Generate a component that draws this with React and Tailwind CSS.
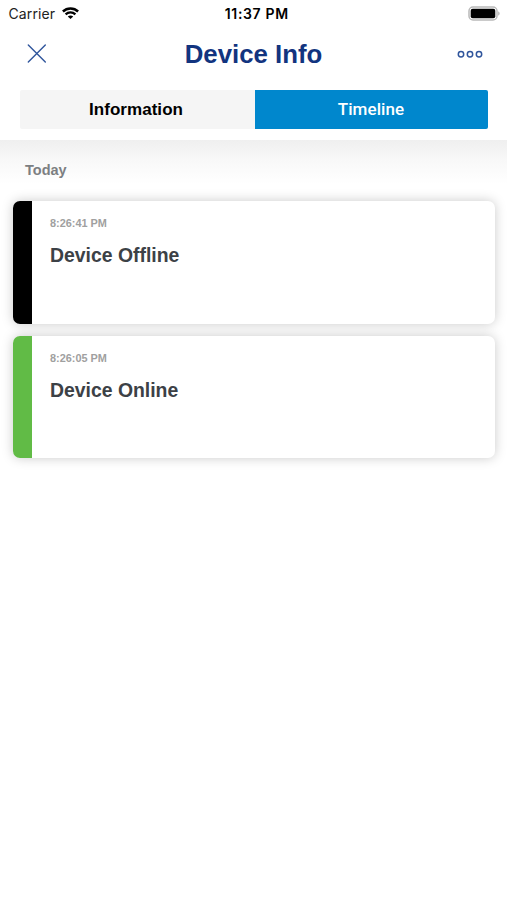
import { useState } from "react";

const EVENTS = [
  { id: 1, time: "8:26:41 PM", title: "Device Offline", bar: "bg-black" },
  { id: 2, time: "8:26:05 PM", title: "Device Online", bar: "bg-[#61bb46]" },
];

const StatusBar = () => (
  <div className="grid h-7 grid-cols-[1fr_80px_1fr] items-center pr-[7px] pl-[8.5px] font-['Inter',sans-serif] text-black">
    <div className="flex items-center gap-[6.5px]">
      <span className="text-[14px] leading-5 tracking-[0.1px] text-[#222]">
        Carrier
      </span>
      <svg className="mb-0.5 h-3 w-[17px]" viewBox="0 0 17 12" fill="none">
        <path
          d="M0.9 4.5C5.1 0.5 11.9 0.5 16.1 4.5"
          stroke="currentColor"
          strokeWidth="2.5"
        />
        <path
          d="M3.6 7.4C6.4 4.8 10.6 4.8 13.4 7.4"
          stroke="currentColor"
          strokeWidth="2.3"
        />
        <path
          d="M8.5 12L5.8 9.5C7.2 8 9.8 8 11.2 9.5Z"
          fill="currentColor"
        />
      </svg>
    </div>
    <span className="pl-[5px] text-center text-[14px] leading-5 font-semibold tracking-[0.65px] whitespace-nowrap">
      11:37 PM
    </span>
    <svg
      className="mb-0.5 h-[15px] w-[32px] justify-self-end"
      viewBox="0 0 32 15"
      fill="none"
    >
      <rect
        x="1"
        y="1"
        width="28"
        height="13"
        rx="4"
        stroke="#b9b9b9"
        strokeWidth="1.5"
      />
      <rect x="2.7" y="2.8" width="24.6" height="9.4" rx="2" fill="#000" />
      <path d="M30.3 5.3C32 6 32 9 30.3 9.7Z" fill="#a5a5a5" />
    </svg>
  </div>
);

const NavBar = () => (
  <div className="grid h-[52px] grid-cols-[80px_1fr_80px] items-center text-[#2f559c]">
    <button aria-label="Close" className="pl-[27px]">
      <svg
        className="h-5 w-5"
        viewBox="0 0 20 20"
        fill="none"
        stroke="currentColor"
        strokeWidth="1.4"
        strokeLinecap="round"
      >
        <path d="M1.3 1L18.3 18M18.3 1L1.3 18" />
      </svg>
    </button>
    <h1 className="text-center text-[25.8px] leading-8 font-bold text-[#12347f]">
      Device Info
    </h1>
    <button aria-label="More" className="justify-self-end pr-6">
      <svg
        className="h-2 w-[26px]"
        viewBox="0 0 26 8"
        fill="none"
        stroke="currentColor"
        strokeWidth="1.5"
      >
        <circle cx="4" cy="4.3" r="2.7" />
        <circle cx="13" cy="4.3" r="2.7" />
        <circle cx="22" cy="4.3" r="2.7" />
      </svg>
    </button>
  </div>
);

const Tabs = ({ active, onChange }) => {
  const base = "h-[39px] text-[17px] leading-[39px]";
  const on = "bg-[#0087cd] font-['Roboto',sans-serif] font-medium text-white";
  const off = "bg-[#f5f5f5] font-bold text-black";

  return (
    <div className="mx-5 mt-2.5 grid w-[468px] grid-cols-[235px_233px] overflow-hidden rounded-[2px]">
      <button
        onClick={() => onChange("information")}
        className={`${base} pr-[3px] tracking-[0.05px] ${active === "information" ? on : off}`}
      >
        Information
      </button>
      <button
        onClick={() => onChange("timeline")}
        className={`${base} pr-px tracking-[0.1px] ${active === "timeline" ? on : off}`}
      >
        Timeline
      </button>
    </div>
  );
};

const EventCard = ({ event }) => (
  <div className="flex h-[122.5px] overflow-hidden rounded-[7px] bg-white shadow-[0_0_12px_rgba(0,0,0,0.21)]">
    <div className={`w-[18.5px] ${event.bar}`} />
    <div className="pt-[15px] pl-[18.5px]">
      <p className="text-[10.9px] leading-[14px] font-bold text-[#a0a0a0]">
        {event.time}
      </p>
      <h2 className="mt-[13px] text-[19.4px] leading-6 font-bold text-[#3c4146]">
        {event.title}
      </h2>
    </div>
  </div>
);

export default function App() {
  const [tab, setTab] = useState("timeline");

  return (
    <div className="min-h-[900px] w-[507px] overflow-hidden bg-white font-['Liberation_Sans',Arial,sans-serif]">
      <header className="h-[140px] bg-white">
        <StatusBar />
        <NavBar />
        <Tabs active={tab} onChange={setTab} />
      </header>

      <main className="bg-[linear-gradient(to_bottom,#efefef,#f8f8f8_20px,#ffffff_44px)] pt-5">
        {/* Day heading */}
        <p className="pl-[25px] text-[14.5px] leading-5 font-bold text-[#7c7f82]">
          Today
        </p>
        <div className="mt-[21px] mr-3 ml-[13px] flex flex-col gap-3">
          {tab === "timeline" &&
            EVENTS.map((event) => <EventCard key={event.id} event={event} />)}
        </div>
      </main>
    </div>
  );
}
